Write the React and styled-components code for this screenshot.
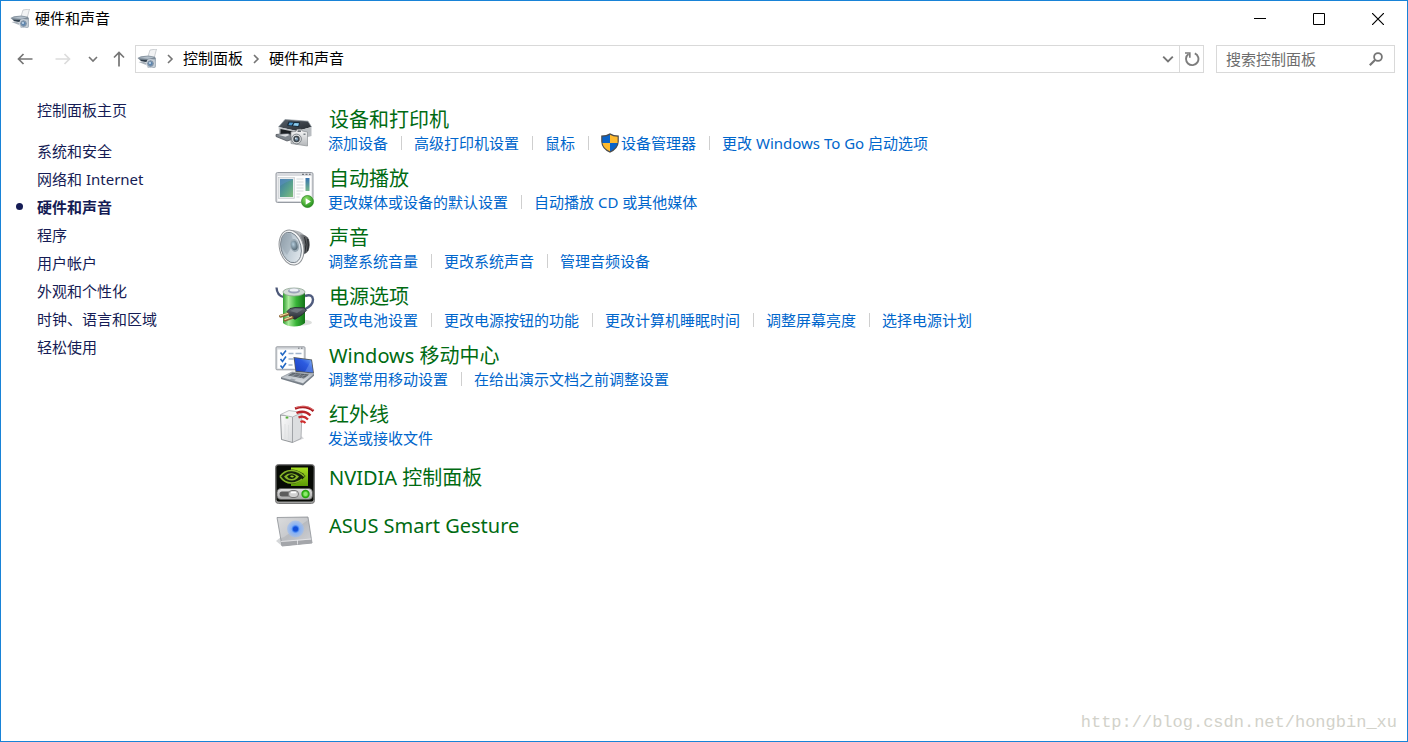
import React, { useState } from 'react'
import styled, { createGlobalStyle } from 'styled-components'

const DevicesSmallIcon = () => (
  <svg width="20" height="20" viewBox="0 0 20 20" aria-hidden="true">
    <defs>
      <linearGradient id="smallBody" x1="0" y1="0" x2="0" y2="1">
        <stop offset="0" stopColor="#93a0ac" />
        <stop offset="1" stopColor="#566471" />
      </linearGradient>
    </defs>
    <path d="M13 1L19.500 0l-2.300 9-6.400-1z" fill="#f2f3f4" stroke="#b9bdc1" strokeWidth=".7" />
    <path d="M.5 9L4 7.200l7.500-.7 6.500 1.300.8 1.700-.8 3-5 1.500-9-2z" fill="url(#smallBody)" />
    <path d="M1.500 9l9-1.600 6.500.8-5 1.700z" fill="#b4c0cb" />
    <path d="M3 10.800l8 .4.5 1.800-7-.8z" fill="#2f3d4a" />
    <path d="M1.500 13l4-.6 6 2.200-3 1.200z" fill="#a8b1ba" />
    <rect x="10.500" y="10" width="8" height="8.500" rx="1" fill="#bcc6cf" stroke="#8794a1" strokeWidth=".6" />
    <circle cx="13.500" cy="14.600" r="4" fill="#8a9aab" stroke="#d9e0e6" strokeWidth=".9" />
    <circle cx="13.500" cy="14.600" r="2.200" fill="#5e86ae" />
    <circle cx="13" cy="14" r=".9" fill="#d5e6f7" />
  </svg>
)

const PrinterIcon = () => (
  <svg width="40" height="40" viewBox="0 0 40 40" aria-hidden="true">
    <defs>
      <linearGradient id="prTop" x1="0" y1="0" x2="1" y2="1">
        <stop offset="0" stopColor="#59616a" />
        <stop offset="1" stopColor="#23282d" />
      </linearGradient>
      <linearGradient id="prFront" x1="0" y1="0" x2="0" y2="1">
        <stop offset="0" stopColor="#cfd2d5" />
        <stop offset="1" stopColor="#7b8085" />
      </linearGradient>
      <linearGradient id="camBody" x1="0" y1="0" x2="0" y2="1">
        <stop offset="0" stopColor="#fbfbfb" />
        <stop offset="1" stopColor="#b3b6b9" />
      </linearGradient>
    </defs>
    <path d="M3.500 17L10 9.500l23 1.700L36.500 17 22 21z" fill="url(#prTop)" />
    <path d="M3.500 17L10 9.500l23 1.700L36.500 17" fill="none" stroke="#8d959c" strokeWidth=".7" />
    <path d="M13.500 11.500l11.500.8-1 4.700-12-1.500z" fill="#152939" />
    <path d="M14.500 12.500l4 .3-2 2.700-3-.4z" fill="#4c98cf" />
    <path d="M19.500 12.900l4.500.4-.8 2.700-5.200-.5z" fill="#8acbee" />
    <path d="M3.500 17L22 21v9L4.500 25.500z" fill="url(#prFront)" />
    <path d="M22 21l14.500-4v9L22 30z" fill="#b9bdc1" />
    <path d="M5.500 19l12 2.600v6L5.500 25z" fill="#1c2024" />
    <path d="M1 24.500l12-1.200 3 1.500v5L12 31 1 26.500z" fill="#7f868d" stroke="#464b51" strokeWidth=".7" />
    <path d="M3 24.800l9.500-.8 2 1-4 1.800z" fill="#d9dcdf" />
    <path d="M16 22l5-.6 1-1.900 4-.2 1.200 1.700L32.500 22v14L16 33.500z" fill="url(#camBody)" stroke="#8d9194" strokeWidth=".7" />
    <rect x="22.500" y="20.300" width="3.500" height="1.700" rx=".5" fill="#6a7076" />
    <circle cx="21.500" cy="29" r="4.900" fill="#dcdedf" stroke="#6b7177" strokeWidth=".8" />
    <circle cx="21.500" cy="29" r="3.200" fill="#3c444b" />
    <circle cx="21.500" cy="29" r="1.700" fill="#7794ab" />
    <circle cx="20.800" cy="28.300" r=".8" fill="#f2f8fd" />
    <rect x="28.500" y="23.500" width="2" height="1.500" fill="#7b8187" />
  </svg>
)

const AutoPlayIcon = () => (
  <svg width="40" height="40" viewBox="0 0 40 40" aria-hidden="true">
    <defs>
      <linearGradient id="apPic" x1="0" y1="0" x2="1" y2="1">
        <stop offset="0" stopColor="#3c75a8" />
        <stop offset=".55" stopColor="#57a08f" />
        <stop offset="1" stopColor="#80bd7b" />
      </linearGradient>
      <linearGradient id="apSide" x1="0" y1="0" x2="0" y2="1">
        <stop offset="0" stopColor="#3673b1" />
        <stop offset="1" stopColor="#75b789" />
      </linearGradient>
      <radialGradient id="apPlay" cx=".4" cy=".3" r=".7">
        <stop offset="0" stopColor="#8fe06a" />
        <stop offset="1" stopColor="#24911c" />
      </radialGradient>
    </defs>
    <rect x="1" y="3.500" width="37" height="30" rx="1.500" fill="#d8dade" stroke="#979ca3" />
    <rect x="2.500" y="7" width="34" height="25" fill="#fdfdfd" />
    <path d="M27 5.300h2M30.500 5.300h2M34 5.300h1.600" stroke="#71767c" strokeWidth="1.200" />
    <rect x="3.500" y="8.500" width="16" height="21" fill="#e9ebed" stroke="#c2c6ca" strokeWidth=".6" />
    <rect x="5" y="10" width="13" height="18" fill="url(#apPic)" />
    <path d="M5 17q7-5 13-6v-1H5z" fill="#5b91be" opacity=".6" />
    <path d="M21.500 10h7M21.500 13h7M21.500 16h7M21.500 19h7M21.500 22h7M21.500 25h4M21.500 28h3" stroke="#d6d9dc" strokeWidth="1.200" />
    <rect x="30.500" y="9" width="4" height="13" fill="url(#apSide)" />
    <circle cx="32.500" cy="32.500" r="6.800" fill="#e8f3e4" />
    <circle cx="32.500" cy="32.500" r="6" fill="url(#apPlay)" stroke="#2c8423" strokeWidth=".7" />
    <path d="M30.700 29.200v6.600l5.200-3.300z" fill="#fff" />
  </svg>
)

const SpeakerIcon = () => (
  <svg width="40" height="40" viewBox="0 0 40 40" aria-hidden="true">
    <defs>
      <linearGradient id="spBack" x1="0" y1="0" x2="1" y2="0">
        <stop offset="0" stopColor="#8b8f93" />
        <stop offset="1" stopColor="#3c3f42" />
      </linearGradient>
      <linearGradient id="spCone" x1="0" y1="0" x2="1" y2="1">
        <stop offset="0" stopColor="#8f9da8" />
        <stop offset=".5" stopColor="#c2ced7" />
        <stop offset="1" stopColor="#eaeff2" />
      </linearGradient>
      <radialGradient id="spCap" cx=".4" cy=".35" r=".7">
        <stop offset="0" stopColor="#b5cddd" />
        <stop offset="1" stopColor="#51646f" />
      </radialGradient>
    </defs>
    <path d="M18 2q8 1 11 5 5 4 5 10-.3 6-4 8-4 7-9 11z" fill="#b6b9bc" />
    <path d="M25 6.500q6-.5 9 5 1.500 6-.5 11-2.500 4-6.500 4z" fill="url(#spBack)" />
    <path d="M29.500 9q3 7 .3 16M32.500 11q1.700 6 0 12" stroke="#222528" strokeWidth=".9" fill="none" />
    <ellipse cx="16.500" cy="19.500" rx="12" ry="17.800" transform="rotate(-14 16.500 19.500)" fill="#f3f4f5" stroke="#8f9397" />
    <ellipse cx="16" cy="19.500" rx="10" ry="15.500" transform="rotate(-14 16 19.500)" fill="url(#spCone)" stroke="#76818a" strokeWidth=".9" />
    <path d="M7 11Q10 4 16 6l3 9-7 12Q5 19 7 11z" fill="#7f909c" opacity=".3" />
    <ellipse cx="19.500" cy="17.500" rx="4.500" ry="6.500" transform="rotate(-14 19.500 17.500)" fill="#9eadb7" />
    <ellipse cx="19.200" cy="17.500" rx="3.200" ry="4.700" transform="rotate(-14 19.200 17.500)" fill="url(#spCap)" />
  </svg>
)

const PowerIcon = () => (
  <svg width="40" height="40" viewBox="0 0 40 40" aria-hidden="true">
    <defs>
      <linearGradient id="pwBattery" x1="0" y1="0" x2="1" y2="0">
        <stop offset="0" stopColor="#2f9d2f" />
        <stop offset=".25" stopColor="#a9eb9b" />
        <stop offset=".6" stopColor="#38b538" />
        <stop offset="1" stopColor="#137218" />
      </linearGradient>
      <linearGradient id="pwPlug" x1="0" y1="0" x2="0" y2="1">
        <stop offset="0" stopColor="#656b75" />
        <stop offset="1" stopColor="#25292f" />
      </linearGradient>
    </defs>
    <ellipse cx="27" cy="35.500" rx="10" ry="3" fill="#c6cac6" opacity=".6" />
    <path d="M1.500.5q.5 8 7 9.500" fill="none" stroke="#4c5878" strokeWidth="2.300" />
    <path d="M8 6v30q4 3.500 11 3.500T30 36V6z" fill="url(#pwBattery)" />
    <ellipse cx="19" cy="5" rx="11" ry="4" fill="#d3dcd7" stroke="#8aa28e" strokeWidth=".8" />
    <ellipse cx="19" cy="4" rx="6" ry="2.500" fill="#9ba2b8" />
    <ellipse cx="19" cy="3" rx="4.500" ry="1.600" fill="#eff1f7" />
    <path d="M30 9q7.500-2.500 8 3.500 0 6-8.500 10" fill="none" stroke="#505c7e" strokeWidth="2.400" />
    <path d="M12 24.500l3-3 5-1 9 .3 2.500 2.500-4.500 4.500-7 4.500-5-2.500z" fill="url(#pwPlug)" stroke="#20242b" strokeWidth=".8" />
    <path d="M15 24l5-2.300 8 .5-6 3.800z" fill="#818890" opacity=".6" />
    <path d="M13 27l-7.500 2.200M17 30.500l-7 2.500" stroke="#8b6235" strokeWidth="3" strokeLinecap="round" />
    <path d="M12.500 26.500l-7 2.200M16.500 30l-6.500 2.300" stroke="#f2d89d" strokeWidth="1.300" strokeLinecap="round" />
  </svg>
)

const MobilityIcon = () => (
  <svg width="40" height="40" viewBox="0 0 40 40" aria-hidden="true">
    <defs>
      <linearGradient id="mbScreen" x1="0" y1="1" x2="1" y2="0">
        <stop offset="0" stopColor="#1b3fbd" />
        <stop offset=".6" stopColor="#2c5be0" />
        <stop offset="1" stopColor="#7cb2f5" />
      </linearGradient>
      <linearGradient id="mbBase" x1="0" y1="0" x2="0" y2="1">
        <stop offset="0" stopColor="#aab1b9" />
        <stop offset="1" stopColor="#e1e5e9" />
      </linearGradient>
    </defs>
    <rect x="1" y=".8" width="29" height="23" rx="1" fill="#d5d8dc" stroke="#979ca2" />
    <rect x="2.500" y="3.500" width="26" height="19" fill="#fff" />
    <path d="M23 2.200h1.500M26 2.200h1.500" stroke="#71767c" />
    <path d="M5.500 6.500l2 2.500L11 4.500M5.500 13l2 2.500L11 10.500M5.500 19.500l2 2.500 3.500-5" fill="none" stroke="#2268c4" strokeWidth="1.600" />
    <path d="M13.500 7.500h5M20.500 7.500h6M13.500 13h5M13.500 19h4" stroke="#a3b6cb" strokeWidth="1.300" />
    <path d="M18.500 11l18.500 2.500 2 14L20.500 26z" fill="#52585f" />
    <path d="M19.500 12l16.700 2.300L38 26.500 21 24.800z" fill="url(#mbScreen)" />
    <path d="M36.200 14.300L38 26.500l-8-.8z" fill="#bcdcff" opacity=".25" />
    <path d="M17 26l22 2-11 9.500-22-6z" fill="url(#mbBase)" stroke="#8b929a" strokeWidth=".7" />
    <path d="M17.500 26.800l16.500 1.800-5 3.900-16-3z" fill="#535a62" />
    <path d="M16 27.800l16 2.200M14.500 29l15.500 2.500M21 27.500l-4 3M26 28l-4 3.500M30 28.500l-4 3.500" stroke="#a3abb4" strokeWidth=".5" />
    <path d="M6 31.500l22 6L39 28v1.800L28 39.400 6 33z" fill="#777f88" />
    <path d="M16.500 32.500l4.500 1.200-2 1.300-4.500-1.200z" fill="#9aa2ab" />
  </svg>
)

const InfraredIcon = () => (
  <svg width="40" height="40" viewBox="0 0 40 40" aria-hidden="true">
    <defs>
      <linearGradient id="irFront" x1="0" y1="0" x2="1" y2="1">
        <stop offset="0" stopColor="#fcfcfc" />
        <stop offset="1" stopColor="#d9dbdd" />
      </linearGradient>
    </defs>
    <path d="M6 34l12 3.500 11-4-2-2z" fill="#bfc2c5" opacity=".6" />
    <path d="M5.500 10l12 1.500v26L6.500 34.500z" fill="url(#irFront)" stroke="#7b8084" strokeWidth=".8" />
    <path d="M17.500 11.500l9.500-4-1 26-8.500 4z" fill="#dcdee0" stroke="#96999d" strokeWidth=".7" />
    <path d="M5.500 9.500l8.500-4 13 2-9.500 4.500z" fill="#f5f5f5" stroke="#a6a9ac" strokeWidth=".7" />
    <path d="M10 19v15M13.500 20v15" stroke="#dcdee0" strokeWidth=".8" />
    <circle cx="12" cy="12.500" r="1.600" fill="#57b03a" stroke="#e9efe7" strokeWidth=".6" />
    <path d="M25.500 17q2.500-1.500 5 1" fill="none" stroke="#cf2d2d" strokeWidth="2.100" />
    <path d="M23.500 12.500q5.500-2.500 9.500 2" fill="none" stroke="#c52a2d" strokeWidth="2.200" />
    <path d="M21.500 8Q29.500 4.500 35.500 10.500" fill="none" stroke="#b92328" strokeWidth="2.300" />
    <path d="M20 3.500Q31-.5 38.500 6" fill="none" stroke="#ab1a20" strokeWidth="2.400" />
    <path d="M20.500 2.700Q31-1.200 38 4.800" fill="none" stroke="#ef8c89" strokeWidth=".7" />
  </svg>
)

const NvidiaIcon = () => (
  <svg width="40" height="40" viewBox="0 0 40 40" aria-hidden="true">
    <defs>
      <linearGradient id="nvEdge" x1="0" y1="0" x2="0" y2="1">
        <stop offset="0" stopColor="#535353" />
        <stop offset="1" stopColor="#a3a3a3" />
      </linearGradient>
      <linearGradient id="nvGreen" x1="0" y1="0" x2="0" y2="1">
        <stop offset="0" stopColor="#a6dd22" />
        <stop offset="1" stopColor="#5c9c05" />
      </linearGradient>
      <linearGradient id="nvBar" x1="0" y1="0" x2="0" y2="1">
        <stop offset="0" stopColor="#e4e4e4" />
        <stop offset="1" stopColor="#a6a6a6" />
      </linearGradient>
    </defs>
    <rect x=".5" y=".5" width="39" height="39" rx="3" fill="url(#nvEdge)" stroke="#777" />
    <rect x="1.500" y="1.500" width="37" height="36" rx="2" fill="#070a05" />
    <path d="M16 3.500h17v18.500H16z" fill="url(#nvGreen)" />
    <path d="M4 12.500Q9 5.500 17 5.500q8 .5 13.500 6.500-6 7.500-13.500 8Q9 20 4 12.500z" fill="#15230a" />
    <path d="M5 12.500Q10 6 17 6.500q7 .5 12.500 6" fill="none" stroke="#86b428" strokeWidth="1.600" />
    <path d="M5 12.500Q10 19.500 17 19q6-.5 10-4" fill="none" stroke="#86b428" strokeWidth="1.600" />
    <path d="M9 12.500q4-4 9-3 4 1 6 3-3 4-7 4-5.500 0-8-4z" fill="#86b428" />
    <path d="M12 12.500q3-3 6-2 2.500.7 3 2.200-2 2.500-4.500 2.300-3 0-4.500-2.500z" fill="#10200a" />
    <path d="M15 12.200q2-1.500 4 .3-1.600 2-4-.3z" fill="#99c52f" />
    <rect x="2" y="24.500" width="35.500" height="11" rx="4" fill="url(#nvBar)" stroke="#575757" strokeWidth=".7" />
    <rect x="4.500" y="27.500" width="18" height="5" rx="2.500" fill="#5c5c5c" />
    <rect x="13.500" y="26.500" width="10" height="7" rx="3.500" fill="#d2d2d2" stroke="#777" />
    <path d="M16 28.500h5" stroke="#fff" strokeWidth="1.500" />
    <circle cx="30.500" cy="30" r="4.200" fill="#27a510" />
    <circle cx="30.500" cy="30" r="2.500" fill="#8ee96f" stroke="#4ccb2c" strokeWidth=".8" />
  </svg>
)

const TouchpadIcon = () => (
  <svg width="40" height="40" viewBox="0 0 40 40" aria-hidden="true">
    <defs>
      <linearGradient id="tpPad" x1="0" y1="0" x2="1" y2="1">
        <stop offset="0" stopColor="#d4d5d7" />
        <stop offset=".5" stopColor="#b9bbbf" />
        <stop offset="1" stopColor="#d3d4d8" />
      </linearGradient>
      <radialGradient id="tpGlow">
        <stop offset="0" stopColor="#1758e1" />
        <stop offset=".35" stopColor="#3d7ff0" />
        <stop offset=".5" stopColor="#86b0f4" />
        <stop offset="1" stopColor="#9cbdf0" stopOpacity=".6" />
      </radialGradient>
    </defs>
    <path d="M1 29l6 5 4-2-5-7z" fill="#888c91" opacity=".35" />
    <path d="M2 5.500L33 5l4 26-30 3z" fill="url(#tpPad)" stroke="#8d9195" strokeWidth=".8" />
    <path d="M3 6.500L32 6l1 2-24 17-3 1z" fill="#fff" opacity=".2" />
    <path d="M6 30l30.700-2.500.5 3.500-30 3z" fill="#a4a6aa" />
    <path d="M6 29.500l30.500-2.500M22.500 28v4.500" stroke="#e8e9eb" strokeWidth=".8" />
    <circle cx="20.500" cy="17" r="8.500" fill="url(#tpGlow)" />
    <circle cx="20.500" cy="17" r="2.500" fill="#124fd8" />
  </svg>
)

const ShieldIcon = () => (
  <svg width="18" height="20" viewBox="0 0 18 20" aria-hidden="true">
    <path d="M9 .3q3.500 2.200 8.800 2.200v6Q17.500 16 9 19.800.5 16 .2 8.500v-6Q5.500 2.500 9 .3z" fill="#4c4c4c" />
    <path d="M9 1.700V10H1.400V3.700Q6 3.500 9 1.700z" fill="#0a63c9" />
    <path d="M9 1.700V10h7.600V3.700Q12 3.500 9 1.700z" fill="#ffba2e" />
    <path d="M1.500 10H9v8.300Q2.500 15.500 1.500 10z" fill="#ffba2e" />
    <path d="M16.500 10H9v8.300q6.500-2.800 7.500-8.300z" fill="#0a63c9" />
  </svg>
)

const ArrowIcon = ({ turn = 0, color = '#757575' }) => (
  <svg width="16" height="16" viewBox="0 0 16 16" fill="none" stroke={color} strokeWidth="1.700" aria-hidden="true">
    <path d="M1 8h14.500M6.500 3L1.500 8l5 5" transform={`rotate(${turn} 8 8)`} />
  </svg>
)

const ChevronIcon = ({ size = 10, turn = 0, weight = 1.6 }) => (
  <svg width={size} height={size} viewBox="0 0 10 10" fill="none" stroke="#757575" strokeWidth={weight} aria-hidden="true">
    <path d="M1 3l4 4 4-4" transform={`rotate(${turn} 5 5)`} />
  </svg>
)

const RefreshIcon = () => (
  <svg width="16" height="16" viewBox="0 0 16 16" fill="none" stroke="#7d7d7d" strokeWidth="1.900" aria-hidden="true">
    <path d="M10.800 2.300A6.200 6.200 0 1 1 4.500 3" />
    <path d="M1 2h4.800v4.800" strokeWidth="1.700" />
  </svg>
)

const SearchIcon = () => (
  <svg width="14" height="14" viewBox="0 0 14 14" fill="none" stroke="#757575" aria-hidden="true">
    <circle cx="9" cy="5" r="3.900" strokeWidth="1.800" />
    <path d="M6 8L.8 13.200" strokeWidth="2.200" />
  </svg>
)

const sidebarItems = [
  '系统和安全', '网络和 Internet', '硬件和声音', '程序', '用户帐户',
  '外观和个性化', '时钟、语言和区域', '轻松使用'
]

const categories = [
  {
    title: '设备和打印机',
    Icon: PrinterIcon,
    links: ['添加设备', '高级打印机设置', '鼠标', { text: '设备管理器', shield: true }, '更改 Windows To Go 启动选项']
  },
  { title: '自动播放', Icon: AutoPlayIcon, links: ['更改媒体或设备的默认设置', '自动播放 CD 或其他媒体'] },
  { title: '声音', Icon: SpeakerIcon, links: ['调整系统音量', '更改系统声音', '管理音频设备'] },
  {
    title: '电源选项',
    Icon: PowerIcon,
    links: ['更改电池设置', '更改电源按钮的功能', '更改计算机睡眠时间', '调整屏幕亮度', '选择电源计划']
  },
  { title: 'Windows 移动中心', Icon: MobilityIcon, links: ['调整常用移动设置', '在给出演示文档之前调整设置'] },
  { title: '红外线', Icon: InfraredIcon, links: ['发送或接收文件'] },
  { title: 'NVIDIA 控制面板', Icon: NvidiaIcon, links: [] },
  { title: 'ASUS Smart Gesture', Icon: TouchpadIcon, links: [] }
]

const App = () => {
  const [current, setCurrent] = useState('硬件和声音')
  const [query, setQuery] = useState('')

  const renderTitleBar = () => (
    <TitleBar>
      <Title>
        <DevicesSmallIcon />
        <BarText>硬件和声音</BarText>
      </Title>
      <div>
        <WindowButton aria-label="最小化">
          <svg width="12" height="12" viewBox="0 0 12 12"><path d="M0 5.500h12" stroke="#000" /></svg>
        </WindowButton>
        <WindowButton aria-label="最大化">
          <svg width="12" height="12" viewBox="0 0 12 12"><path d="M.5.5h11v11H.5z" stroke="#000" fill="none" /></svg>
        </WindowButton>
        <WindowButton aria-label="关闭">
          <svg width="12" height="12" viewBox="0 0 12 12"><path d="M0 0l12 12M12 0L0 12" stroke="#000" strokeWidth="1.200" /></svg>
        </WindowButton>
      </div>
    </TitleBar>
  )

  const renderToolbar = () => (
    <Toolbar>
      <ToolButton $width={38} aria-label="后退"><ArrowIcon /></ToolButton>
      <ToolButton $width={38} aria-label="前进" disabled><ArrowIcon turn={180} color="#dcdcdc" /></ToolButton>
      <ToolButton $width={22} aria-label="最近浏览的位置"><ChevronIcon /></ToolButton>
      <ToolButton $width={30} aria-label="上移"><ArrowIcon turn={90} /></ToolButton>
      <AddressBar>
        <Crumbs>
          <DevicesSmallIcon />
          <ChevronIcon turn={-90} />
          <BarText as="a" href="#home">控制面板</BarText>
          <ChevronIcon turn={-90} />
          <BarText as="a" href="#hardware">硬件和声音</BarText>
        </Crumbs>
        <ToolButton $width={22} aria-label="以前的位置"><ChevronIcon size={12} /></ToolButton>
        <RefreshButton $width={24} aria-label="刷新"><RefreshIcon /></RefreshButton>
      </AddressBar>
      <SearchBox>
        <input
          aria-label="搜索控制面板"
          placeholder="搜索控制面板"
          value={query}
          onChange={e => setQuery(e.target.value)}
        />
        <SearchIcon />
      </SearchBox>
    </Toolbar>
  )

  const renderCategory = ({ title, Icon, links }) => (
    <Category key={title} $plain={!links.length}>
      <Icon />
      <div>
        <CategoryTitle $plain={!links.length}><a href="#category">{title}</a></CategoryTitle>
        {links.length > 0 && (
          <TaskList>
            {links.map(link => (
              <Task key={link.text || link}>
                {link.shield && <ShieldIcon />}
                <a href="#task">{link.text || link}</a>
              </Task>
            ))}
          </TaskList>
        )}
      </div>
    </Category>
  )

  return (
    <Window>
      <GlobalStyle />
      {renderTitleBar()}
      {renderToolbar()}
      <Body>
        <Sidebar>
          <SideLink href="#home">控制面板主页</SideLink>
          <SideList>
            {sidebarItems.map(item => (
              <li key={item}>
                <SideLink href="#side" $active={item === current} onClick={() => setCurrent(item)}>{item}</SideLink>
              </li>
            ))}
          </SideList>
        </Sidebar>
        <Main>{categories.map(renderCategory)}</Main>
      </Body>
      <Watermark>http://blog.csdn.net/hongbin_xu</Watermark>
    </Window>
  )
}

const GlobalStyle = createGlobalStyle`
  * {
    box-sizing: border-box;
  }
  body {
    margin: 0;
    background: #fff;
  }
  body, button, input {
    font-family: "Noto Sans", "Noto Sans CJK SC", sans-serif;
    font-size: 15px;
  }
  a {
    color: inherit;
    text-decoration: none;
  }
  button {
    padding: 0;
    border: none;
    background: none;
  }
  ul {
    margin: 0;
    padding: 0;
    list-style: none;
  }
  svg {
    flex-shrink: 0;
  }
`
const Window = styled.div`
  display: flex;
  flex-direction: column;
  min-height: 100vh;
  border: 1px solid #1883d7;
`
const TitleBar = styled.header`
  display: flex;
  justify-content: space-between;
  height: 36px;
`
const Title = styled.div`
  display: flex;
  align-items: center;
  gap: 5px;
  padding-left: 9px;
`
const BarText = styled.span`
  padding-bottom: 2px;
  line-height: 20px;
  color: #000;
`
const WindowButton = styled.button`
  width: 59px;
  height: 36px;
  &:hover {
    background: #e5e5e5;
  }
`
const Toolbar = styled.div`
  display: flex;
  align-items: center;
  height: 44px;
  padding: 0 12px 0 5px;
`
const ToolButton = styled.button`
  display: flex;
  align-items: center;
  justify-content: center;
  width: ${props => props.$width}px;
  height: 26px;
`
const AddressBar = styled.div`
  display: flex;
  flex: 1;
  height: 28px;
  margin-left: 1px;
  border: 1px solid #d9d9d9;
`
const Crumbs = styled.nav`
  display: flex;
  flex: 1;
  align-items: center;
  gap: 8px;
  padding-left: 1px;
`
const RefreshButton = styled(ToolButton)`
  border-left: 1px solid #d9d9d9;
`
const SearchBox = styled.label`
  display: flex;
  align-items: center;
  width: 179px;
  height: 28px;
  margin-left: 12px;
  padding: 0 11px 0 9px;
  border: 1px solid #d9d9d9;
  input {
    flex: 1;
    min-width: 0;
    padding: 0;
    border: none;
    outline: none;
    background: none;
  }
  input::placeholder {
    color: #6d6d6d;
  }
`
const Body = styled.div`
  display: flex;
  flex: 1;
`
const Sidebar = styled.nav`
  width: 274px;
  padding: 15px 0 0 36px;
`
const SideList = styled.ul`
  margin-top: 13px;
`
const SideLink = styled.a`
  position: relative;
  display: block;
  line-height: 28px;
  color: #151c55;
  font-weight: ${props => (props.$active ? 'bold' : 'normal')};
  &::before {
    content: '';
    display: ${props => (props.$active ? 'block' : 'none')};
    position: absolute;
    left: -21px;
    top: 10px;
    width: 7px;
    height: 7px;
    border-radius: 50%;
    background: #151c55;
  }
`
const Main = styled.main`
  flex: 1;
  padding-top: 25px;
`
const Category = styled.section`
  display: flex;
  gap: 13px;
  min-height: 48px;
  margin-bottom: ${props => (props.$plain ? 0 : 11)}px;
  > svg {
    margin-top: 4px;
  }
`
const CategoryTitle = styled.h2`
  margin: 0;
  padding: ${props => (props.$plain ? 4 : 0)}px 0 0 1px;
  font-size: 20px;
  line-height: 28px;
  font-weight: normal;
  color: #006b12;
`
const TaskList = styled.ul`
  display: flex;
  flex-wrap: wrap;
`
const Task = styled.li`
  display: flex;
  align-items: center;
  gap: 2px;
  height: 18px;
  line-height: 18px;
  color: #0066cc;
  & + &::before {
    content: '';
    width: 1px;
    height: 14px;
    margin: 0 10px 0 13px;
    background: #cfcfcf;
  }
`
const Watermark = styled.footer`
  padding: 0 10px 8px;
  font-family: "Liberation Mono", monospace;
  font-size: 17px;
  line-height: 20px;
  text-align: right;
  color: #d2d2ca;
`
export default App
